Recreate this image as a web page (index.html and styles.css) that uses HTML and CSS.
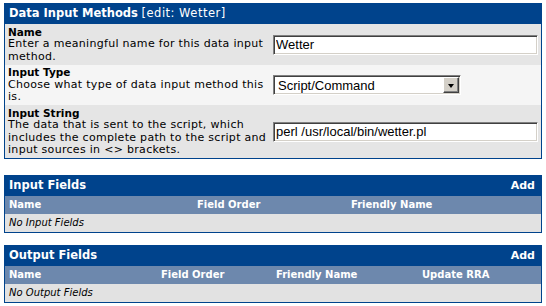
FILE: index.html
```html
<!DOCTYPE html>
<html lang="en">
<head>
    <title>Data Input Methods</title>
    <link rel="stylesheet" href="styles.css">
</head>
<body>
    <div class="panel">
        <div class="panel-head">
            <span class="title">Data Input Methods</span> <span class="edit">[edit: Wetter]</span>
        </div>

        <div class="form-row dark">
            <div class="field-info">
                <div class="field-title">Name</div>
                Enter a meaningful name for this data input method.
            </div>
            <div class="field-input">
                <input type="text" class="text-input" value="Wetter">
            </div>
        </div>

        <div class="form-row light">
            <div class="field-info">
                <div class="field-title">Input Type</div>
                Choose what type of data input method this is.
            </div>
            <div class="field-input">
                <div class="select-wrap">
                    <select class="select-input">
                        <option>Script/Command</option>
                        <option>SNMP</option>
                        <option>SNMP Query</option>
                    </select>
                    <span class="select-button"><span class="arrow"></span></span>
                </div>
            </div>
        </div>

        <div class="form-row dark">
            <div class="field-info">
                <div class="field-title">Input String</div>
                The data that is sent to the script, which includes the complete path to the script and input sources in &lt;&gt; brackets.
            </div>
            <div class="field-input">
                <input type="text" class="text-input" value="perl /usr/local/bin/wetter.pl">
            </div>
        </div>
    </div>

    <div class="panel list input-fields">
        <div class="panel-head split">
            <span class="title">Input Fields</span>
            <a class="add" href="#">Add</a>
        </div>
        <div class="list-row cols">
            <span>Name</span>
            <span>Field Order</span>
            <span>Friendly Name</span>
        </div>
        <div class="list-row empty">No Input Fields</div>
    </div>

    <div class="panel list output-fields">
        <div class="panel-head split">
            <span class="title">Output Fields</span>
            <a class="add" href="#">Add</a>
        </div>
        <div class="list-row cols">
            <span>Name</span>
            <span>Field Order</span>
            <span>Friendly Name</span>
            <span>Update RRA</span>
        </div>
        <div class="list-row empty">No Output Fields</div>
    </div>
</body>
</html>
```

FILE: styles.css
```css
body {
    margin: 3px 4px;
    background: #fff;
    font-family: "DejaVu Sans", Verdana, sans-serif;
    font-size: 10px;
    color: #000;
}
.panel {
    border: 1px solid #00438c;
    border-top: none;
    background: #e5e5e5;
}
.panel-head {
    background: #00438c;
    color: #fff;
    height: 21px;
    line-height: 21px;
    padding: 0 4px;
    font-size: 11.5px;
}
.panel-head .title {
    font-weight: bold;
}
.panel-head .edit {
    letter-spacing: 0.5px;
}
.panel-head.split {
    display: flex;
    justify-content: space-between;
}
.add {
    color: #fff;
    font-weight: bold;
    text-decoration: none;
    font-size: 11px;
    padding-right: 2px;
}
.form-row {
    display: grid;
    grid-template-columns: 268px 1fr;
    align-items: center;
    font-size: 11px;
}
.form-row.dark {
    background: #e5e5e5;
}
.form-row.light {
    background: #f5f5f5;
}
.form-row:nth-child(2) {
    height: 41px;
}
.form-row:nth-child(3) {
    height: 40px;
}
.form-row:nth-child(4) {
    height: 53px;
}
.field-info {
    padding: 0 4px 0 3px;
    line-height: 12.5px;
    letter-spacing: 0.3px;
}
.field-title {
    font-weight: bold;
    font-size: 10.5px;
    letter-spacing: 0;
}
.field-input {
    padding-right: 3px;
}
.text-input {
    box-sizing: border-box;
    display: block;
    width: 265px;
    height: 20px;
    margin: 0;
    padding: 0 2px;
    font-family: "Liberation Sans", Arial, sans-serif;
    font-size: 13px;
    color: #000;
    background: #fff;
    border: 1px solid;
    border-color: #808080 #fff #fff #808080;
    box-shadow: inset 1px 1px #404040, inset -1px -1px #d4d0c8;
    outline: none;
}
.select-wrap {
    position: relative;
    width: 188px;
    height: 20px;
}
.select-input {
    -webkit-appearance: none;
    appearance: none;
    box-sizing: border-box;
    width: 100%;
    height: 20px;
    margin: 0;
    padding: 0 4px;
    font-family: "Liberation Sans", Arial, sans-serif;
    font-size: 13px;
    color: #000;
    background: #fff;
    border: 1px solid;
    border-color: #808080 #fff #fff #808080;
    box-shadow: inset 1px 1px #404040, inset -1px -1px #d4d0c8;
    border-radius: 0;
    outline: none;
}
.select-button {
    position: absolute;
    top: 2px;
    right: 2px;
    width: 16px;
    height: 16px;
    box-sizing: border-box;
    background: #d4d0c8;
    border: 1px solid;
    border-color: #fff #404040 #404040 #fff;
    box-shadow: inset -1px -1px #808080;
    pointer-events: none;
    display: flex;
    align-items: center;
    justify-content: center;
}
.arrow {
    width: 0;
    height: 0;
    border-left: 3.5px solid transparent;
    border-right: 3.5px solid transparent;
    border-top: 4px solid #000;
    margin-top: 1px;
}
.list {
    margin-top: 16px;
}
.output-fields {
    margin-top: 12px;
}
.list-row {
    height: 18px;
    line-height: 18px;
    padding: 0 4px;
}
.list-row.cols {
    display: grid;
    background: #6d88ad;
    color: #fff;
    font-weight: bold;
}
.input-fields .cols {
    grid-template-columns: 188px 154px 1fr;
}
.output-fields .cols {
    grid-template-columns: 152px 115px 146px 1fr;
}
.list-row.empty {
    background: #e2e2e2;
    font-style: italic;
}
```
